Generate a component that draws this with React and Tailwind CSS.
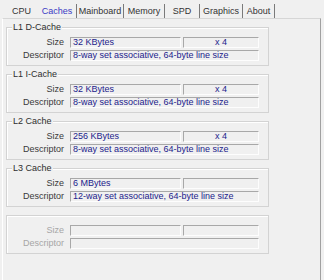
const tabs = [
  { name: 'CPU',       w: 'w-[33px]', sep: false },
  { name: 'Caches',    w: 'w-[39px]', sep: true, active: true },
  { name: 'Mainboard', w: 'w-[47px]', sep: true },
  { name: 'Memory',    w: 'w-[41px]', sep: true },
  { name: 'SPD',       w: 'w-[35px]', sep: true },
  { name: 'Graphics',  w: 'w-[43px]', sep: true },
  { name: 'About',     w: 'w-[32px]', sep: true },
]

const caches = [
  { title: 'L1 D-Cache', size: '32 KBytes',  count: 'x 4', desc: '8-way set associative, 64-byte line size' },
  { title: 'L1 I-Cache', size: '32 KBytes',  count: 'x 4', desc: '8-way set associative, 64-byte line size' },
  { title: 'L2 Cache',   size: '256 KBytes', count: 'x 4', desc: '8-way set associative, 64-byte line size' },
  { title: 'L3 Cache',   size: '6 MBytes',   count: '',    desc: '12-way set associative, 64-byte line size' },
  { title: '',           size: '',           count: '',    desc: '', disabled: true },
]

function Field({ value, className }) {
  return (
    <div className={`h-[11px] border border-t-[#a8a8a8] border-l-[#a8a8a8] border-b-[#fdfdfd] border-r-[#fdfdfd] px-[2px] text-[#22228c] leading-[9px] whitespace-nowrap overflow-hidden ${className}`}>
      {value}
    </div>
  )
}

function CacheGroup({ c }) {
  const label = c.disabled ? 'text-[#a6a6a6]' : 'text-[#3a3a3a]'
  return (
    <div className="relative ml-[3px] mb-[8px] w-[263px] h-[39px] border border-[#d3d3d3] shadow-[inset_1px_1px_0_#ffffff] pt-[9px]">
      {c.title && (
        <span className="absolute -top-[6px] left-[5px] px-[1px] bg-[#f0f0f0] leading-[11px] text-[#2e2e2e]">
          {c.title}
        </span>
      )}
      <div className="flex items-center">
        <span className={`w-[57px] text-right leading-[11px] ${label}`}>Size</span>
        <Field value={c.size} className="ml-[6px] w-[111px]" />
        <Field value={c.count} className="ml-[2px] w-[76px] text-center" />
      </div>
      <div className="flex items-center mt-[2px]">
        <span className={`w-[57px] text-right leading-[11px] ${label}`}>Descriptor</span>
        <Field value={c.desc} className="ml-[6px] w-[189px]" />
      </div>
    </div>
  )
}

export default function App() {
  return (
    <div className="w-[324px] h-[280px] overflow-hidden bg-[#f0f0f0] text-[9px] font-['Liberation_Sans',Arial,sans-serif]">
      {/* Tabs */}
      <div className="flex h-[18px] pt-[4px] pl-[5px]">
        {tabs.map(t => (
          <div
            key={t.name}
            className={`${t.w} h-[14px] leading-[14px] text-center ${t.sep ? 'border-r border-r-[#7a7a7a]' : ''} ${t.active ? 'text-[#3b3bc4]' : 'text-[#333333]'}`}
          >
            {t.name}
          </div>
        ))}
      </div>

      {/* Panel */}
      <div className="ml-[2px] w-[319px] h-[262px] border-t border-t-[#d6d6d6] border-l border-l-white border-r border-r-[#a0a0a0] pt-[8px]">
        {caches.map((c, i) => <CacheGroup key={i} c={c} />)}
      </div>
    </div>
  )
}
